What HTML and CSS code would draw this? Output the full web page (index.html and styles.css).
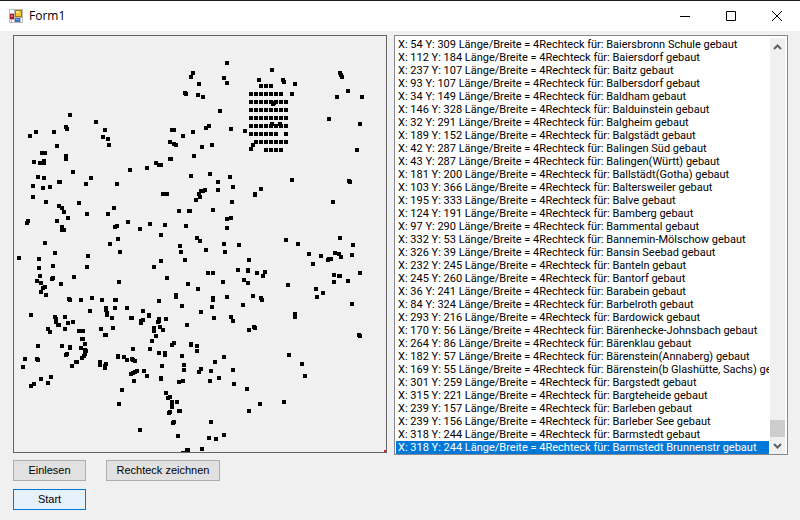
FILE: index.html
```
<!DOCTYPE html>
<html lang="de">
<head>
<meta charset="utf-8">
<title>Form1</title>
<link rel="stylesheet" href="styles.css">
</head>
<body>
<header class="titlebar">
  <svg class="app-icon" viewBox="0 0 14 14" shape-rendering="crispEdges" aria-hidden="true">
    <path fill="#b8b8b8" d="M0 0h14v14H0z"/>
    <path fill="#fff" d="M1 1h4v3H1zM1 11h1v2H1zM3 11h2v2H3zM12 9h1v4h-1z"/>
    <path fill="#a51c18" d="M1 5h4v5H1z"/><path fill="#e8705c" d="M2 6h2v2H2z"/>
    <path fill="#a87a10" d="M6 1h7v7H6z"/><path fill="#f6c52c" d="M7 2h5v5H7z"/><path fill="#ffe98c" d="M7 2h3v2H7z"/>
    <path fill="#3a6fd8" d="M6 9h5v4H6z"/><path fill="#7fa8f4" d="M7 10h3v1H7z"/>
  </svg>
  <h1 class="title">Form1</h1>
  <div class="window-buttons">
    <button class="window-button" aria-label="Minimieren"><svg viewBox="0 0 10 10"><path d="M0 5.500h10"/></svg></button>
    <button class="window-button" aria-label="Maximieren"><svg viewBox="0 0 10 10"><path d="M.5.500h9v9h-9z"/></svg></button>
    <button class="window-button" aria-label="Schließen"><svg viewBox="0 0 10 10"><path d="M0 0l10 10M10 0L0 10"/></svg></button>
  </div>
</header>
<main class="client">
  <section class="left">
    <div class="canvas">
      <svg class="map" viewBox="14 36 372 416" role="img" aria-label="Karte">
        <path class="stations" d="M70 115h0M96 122h0M66 127h0M67 129h0M105 130h0M36 132h0M30 136h0M54 132h0M103 137h0M108 139h0M109 145h0M57 146h0M42 153h0M45 153h0M66 156h0
M227 63h0M193 73h0M191 77h0M199 84h0M224 78h0M227 83h0M185 93h0M186 94h0M198 95h0M203 97h0M220 111h0M172 130h0M174 130h0M183 136h0M193 132h0M206 128h0M209 126h0M231 129h0M245 131h0M170 142h0M174 144h0M176 145h0M194 156h0M202 147h0M212 145h0M170 159h0M171 159h0M259 80h0M253 145h0M251 149h0
M261 86h0M266 86h0M271 86h0
M251 94h0M256 94h0M261 94h0M266 94h0M271 94h0M276 94h0M281 94h0
M251 102h0M256 102h0M261 102h0M266 102h0M271 102h0M276 102h0M281 102h0M286 102h0
M251 110h0M256 110h0M261 110h0M266 110h0M271 110h0M276 110h0M281 110h0M286 110h0
M251 118h0M256 118h0M261 118h0M266 118h0M271 118h0M276 118h0M281 118h0M286 118h0
M251 126h0M256 126h0M261 126h0M266 126h0M271 126h0M276 126h0M281 126h0M286 126h0
M251 134h0M256 134h0M261 134h0M266 134h0M271 134h0M276 134h0M286 134h0
M256 142h0M261 142h0M266 142h0M271 142h0M276 142h0M281 142h0M286 142h0
M266 150h0M271 150h0M276 150h0M281 150h0
M272 70h0M283 80h0M284 82h0M295 84h0M292 94h0M273 104h0M274 103h0M272 124h0M280 124h0M340 73h0M341 75h0M342 77h0M348 91h0M337 97h0M362 97h0M329 119h0M360 124h0M357 150h0
M34 162h0M40 163h0M44 163h0M44 161h0M66 159h0M38 177h0M44 178h0M33 186h0M43 188h0M50 187h0M59 182h0M60 182h0M73 172h0M91 178h0M86 184h0M117 184h0M130 170h0M33 197h0M46 202h0M59 206h0M62 208h0M64 212h0M68 218h0M79 203h0M87 214h0M114 208h0M108 214h0M28 221h0M27 223h0M57 221h0M62 227h0M62 230h0M64 230h0M128 222h0M117 226h0M115 227h0M140 229h0M45 243h0M118 239h0M110 244h0M55 253h0M120 252h0M19 258h0M39 259h0M88 256h0M39 268h0M53 266h0M87 267h0M40 276h0M37 281h0M41 283h0M53 278h0M52 279h0M74 277h0M61 284h0M119 282h0M45 287h0M43 288h0M41 292h0M46 295h0
M69 299h0M70 300h0M81 300h0M92 298h0M102 300h0M115 300h0M116 300h0M90 311h0M106 308h0M115 308h0M127 308h0M106 310h0M107 313h0M107 315h0M112 318h0M31 315h0M55 317h0M56 319h0M56 322h0M58 325h0M59 325h0M65 317h0M68 323h0M73 322h0M65 329h0M48 329h0M50 332h0M79 331h0M81 331h0M83 331h0M101 329h0M113 328h0M105 335h0M106 335h0M131 318h0M132 318h0M82 339h0M83 339h0M85 344h0M38 346h0M62 346h0M70 347h0M70 348h0M81 348h0M85 350h0M86 351h0M85 354h0M84 356h0M82 358h0M77 362h0M76 362h0M72 366h0M67 354h0M66 355h0M25 359h0M23 367h0M37 359h0M38 360h0M100 362h0M100 365h0M106 364h0M105 366h0M105 368h0M118 356h0M118 357h0M124 357h0M127 360h0M132 359h0M133 360h0M135 361h0M133 349h0M137 371h0M135 372h0M133 373h0M131 374h0M134 381h0M122 390h0M51 377h0M48 383h0M41 379h0M34 384h0M31 386h0
M156 163h0M159 165h0M161 165h0M147 168h0M191 176h0M210 174h0M230 177h0M218 182h0M218 190h0M233 187h0M163 194h0M165 194h0M167 194h0M201 191h0M205 190h0M203 191h0M199 194h0M200 197h0M196 200h0M255 194h0M255 195h0M261 189h0M232 202h0M179 211h0M189 211h0M190 211h0M213 210h0M227 219h0M231 218h0M150 224h0M165 225h0M186 226h0M227 228h0M161 235h0M197 238h0M200 241h0M180 246h0M181 252h0M224 244h0M239 245h0M225 252h0M206 250h0M185 260h0M161 261h0M154 267h0M249 260h0M208 273h0M213 273h0M238 270h0M248 270h0M248 271h0M257 273h0M265 272h0M263 276h0M244 280h0M248 283h0M223 282h0M167 278h0M188 284h0M198 289h0M176 295h0M176 297h0M159 301h0M182 306h0M213 298h0M213 300h0M227 297h0M253 296h0M261 298h0M262 300h0M243 305h0M212 307h0M143 311h0
M292 180h0M349 181h0M350 182h0M333 202h0M340 238h0M286 240h0M298 244h0M353 245h0M309 254h0M321 256h0M335 253h0M339 254h0M341 257h0M352 255h0M328 260h0M329 259h0M331 259h0M313 264h0M334 275h0M339 276h0M340 276h0M360 273h0M334 282h0M348 281h0M288 285h0M316 289h0M323 293h0M317 297h0M352 304h0M295 314h0M295 317h0M359 335h0M360 336h0M289 355h0M302 364h0M305 376h0M284 402h0
M201 312h0M149 315h0M149 316h0M141 321h0M141 323h0M143 320h0M159 319h0M158 322h0M159 321h0M166 319h0M187 325h0M214 318h0M231 317h0M233 321h0M249 330h0M254 327h0M255 328h0M154 328h0M154 331h0M160 327h0M163 330h0M156 336h0M152 341h0M150 349h0M174 343h0M172 345h0M191 344h0M191 345h0M197 346h0M197 351h0M159 353h0M165 353h0M165 355h0M182 356h0M224 357h0M215 362h0M162 366h0M184 365h0M184 370h0M144 371h0M201 369h0M199 372h0M211 371h0M233 370h0M147 376h0M161 378h0M161 379h0M179 382h0M183 381h0M210 381h0M219 378h0M234 384h0M247 389h0M166 393h0M168 398h0M170 397h0M172 402h0M172 405h0M172 407h0M177 402h0M170 412h0M169 413h0M179 411h0M180 411h0M174 422h0M173 423h0M140 430h0M178 436h0M211 422h0M209 438h0M216 439h0M224 435h0M202 449h0M187 450h0M188 450h0M183 453h0M260 404h0M249 411h0M119 404h0"/>
        <path class="origin" d="M384 450h2v2h-2z"/>
      </svg>
    </div>
    <div class="actions">
      <button class="button">Einlesen</button>
      <button class="button wide">Rechteck zeichnen</button>
    </div>
    <div class="actions">
      <button class="button active">Start</button>
    </div>
  </section>
  <section class="listbox">
    <select class="log" size="32" aria-label="Ausgabe">
      <option>X: 54 Y: 309 Länge/Breite = 4Rechteck für: Baiersbronn Schule gebaut</option>
      <option>X: 112 Y: 184 Länge/Breite = 4Rechteck für: Baiersdorf gebaut</option>
      <option>X: 237 Y: 107 Länge/Breite = 4Rechteck für: Baitz gebaut</option>
      <option>X: 93 Y: 107 Länge/Breite = 4Rechteck für: Balbersdorf gebaut</option>
      <option>X: 34 Y: 149 Länge/Breite = 4Rechteck für: Baldham gebaut</option>
      <option>X: 146 Y: 328 Länge/Breite = 4Rechteck für: Balduinstein gebaut</option>
      <option>X: 32 Y: 291 Länge/Breite = 4Rechteck für: Balgheim gebaut</option>
      <option>X: 189 Y: 152 Länge/Breite = 4Rechteck für: Balgstädt gebaut</option>
      <option>X: 42 Y: 287 Länge/Breite = 4Rechteck für: Balingen Süd gebaut</option>
      <option>X: 43 Y: 287 Länge/Breite = 4Rechteck für: Balingen(Württ) gebaut</option>
      <option>X: 181 Y: 200 Länge/Breite = 4Rechteck für: Ballstädt(Gotha) gebaut</option>
      <option>X: 103 Y: 366 Länge/Breite = 4Rechteck für: Baltersweiler gebaut</option>
      <option>X: 195 Y: 333 Länge/Breite = 4Rechteck für: Balve gebaut</option>
      <option>X: 124 Y: 191 Länge/Breite = 4Rechteck für: Bamberg gebaut</option>
      <option>X: 97 Y: 290 Länge/Breite = 4Rechteck für: Bammental gebaut</option>
      <option>X: 332 Y: 53 Länge/Breite = 4Rechteck für: Bannemin-Mölschow gebaut</option>
      <option>X: 326 Y: 39 Länge/Breite = 4Rechteck für: Bansin Seebad gebaut</option>
      <option>X: 232 Y: 245 Länge/Breite = 4Rechteck für: Banteln gebaut</option>
      <option>X: 245 Y: 260 Länge/Breite = 4Rechteck für: Bantorf gebaut</option>
      <option>X: 36 Y: 241 Länge/Breite = 4Rechteck für: Barabein gebaut</option>
      <option>X: 84 Y: 324 Länge/Breite = 4Rechteck für: Barbelroth gebaut</option>
      <option>X: 293 Y: 216 Länge/Breite = 4Rechteck für: Bardowick gebaut</option>
      <option>X: 170 Y: 56 Länge/Breite = 4Rechteck für: Bärenhecke-Johnsbach gebaut</option>
      <option>X: 264 Y: 86 Länge/Breite = 4Rechteck für: Bärenklau gebaut</option>
      <option>X: 182 Y: 57 Länge/Breite = 4Rechteck für: Bärenstein(Annaberg) gebaut</option>
      <option>X: 169 Y: 55 Länge/Breite = 4Rechteck für: Bärenstein(b Glashütte, Sachs) gebaut</option>
      <option>X: 301 Y: 259 Länge/Breite = 4Rechteck für: Bargstedt gebaut</option>
      <option>X: 315 Y: 221 Länge/Breite = 4Rechteck für: Bargteheide gebaut</option>
      <option>X: 239 Y: 157 Länge/Breite = 4Rechteck für: Barleben gebaut</option>
      <option>X: 239 Y: 156 Länge/Breite = 4Rechteck für: Barleber See gebaut</option>
      <option>X: 318 Y: 244 Länge/Breite = 4Rechteck für: Barmstedt gebaut</option>
      <option selected>X: 318 Y: 244 Länge/Breite = 4Rechteck für: Barmstedt Brunnenstr gebaut</option>
    </select>
    <div class="scrollbar">
      <button class="arrow" aria-label="Nach oben"><svg viewBox="0 0 9 6"><path d="M1 5l3.500-3.500L8 5"/></svg></button>
      <div class="track"><div class="thumb"></div></div>
      <button class="arrow" aria-label="Nach unten"><svg viewBox="0 0 9 6"><path d="M1 1l3.500 3.500L8 1"/></svg></button>
    </div>
  </section>
</main>
</body>
</html>
```
FILE: styles.css
```
* { box-sizing: border-box; }
body {
  margin: 0;
  min-height: 100vh;
  background: #f0f0f0;
  color: #000;
  font: 11px/13px "Liberation Sans", Arial, sans-serif;
}
button { font: inherit; color: inherit; padding: 0; margin: 0; }
.titlebar {
  display: flex;
  align-items: center;
  height: 31px;
  padding-left: 9px;
  border-top: 1px solid #1f1b1f;
  background: #fff;
}
.app-icon { width: 14px; height: 14px; }
.title {
  flex: 1;
  margin: 0 0 0 6px;
  font: 12px/16px "Open Sans", "Noto Sans", sans-serif;
}
.window-buttons { display: flex; }
.window-button {
  display: flex;
  align-items: center;
  justify-content: center;
  width: 46px;
  height: 30px;
  border: 0;
  background: none;
}
.window-button svg {
  width: 10px;
  height: 10px;
  fill: none;
  stroke: #000;
  stroke-width: 1;
}
.client {
  display: grid;
  grid-template-columns: minmax(0, 374fr) minmax(0, 394fr);
  gap: 7px;
  align-items: start;
  padding: 4px 12px 0 13px;
}
.canvas { border: 1px solid #646464; }
.map { display: block; width: 100%; }
.stations {
  fill: none;
  stroke: #000;
  stroke-width: 4;
  stroke-linecap: square;
}
.origin { fill: #e02020; }
.actions {
  display: flex;
  gap: 20px;
  margin-top: 7px;
}
.actions + .actions { margin-top: 8px; }
.button {
  width: 73px;
  height: 21px;
  border: 1px solid #adadad;
  background: #e1e1e1;
}
.button.wide { width: 114px; }
.button.active { border-color: #0078d7; background: #e5f1fb; }
.listbox {
  display: flex;
  border: 1px solid #828790;
  background: #fff;
  padding: 2px 1px 0;
}
.log {
  flex: 1;
  min-width: 0;
  height: 416px;
  margin: 0;
  padding: 0;
  border: 0;
  border-radius: 0;
  outline: 0;
  overflow: hidden;
  background: #fff;
  font: 11px/13px Roboto, "Liberation Sans", sans-serif;
}
.log option {
  min-height: 13px;
  padding: 0 0 0 2px;
  color: #000;
  line-height: 13px;
}
.log option:checked {
  background: #0078d7 linear-gradient(#0078d7, #0078d7);
  color: #fff;
  -webkit-text-fill-color: #fff;
}
.scrollbar {
  display: flex;
  flex-direction: column;
  width: 17px;
  border: solid #fff;
  border-width: 0 1px;
  background: #f0f0f0;
}
.arrow {
  display: flex;
  align-items: center;
  justify-content: center;
  height: 17px;
  border: 0;
  background: none;
}
.arrow svg {
  width: 9px;
  height: 6px;
  fill: none;
  stroke: #606060;
  stroke-width: 2;
}
.track {
  display: flex;
  flex: 1;
  flex-direction: column;
  justify-content: flex-end;
}
.thumb { height: 17px; background: #cdcdcd; }
```
